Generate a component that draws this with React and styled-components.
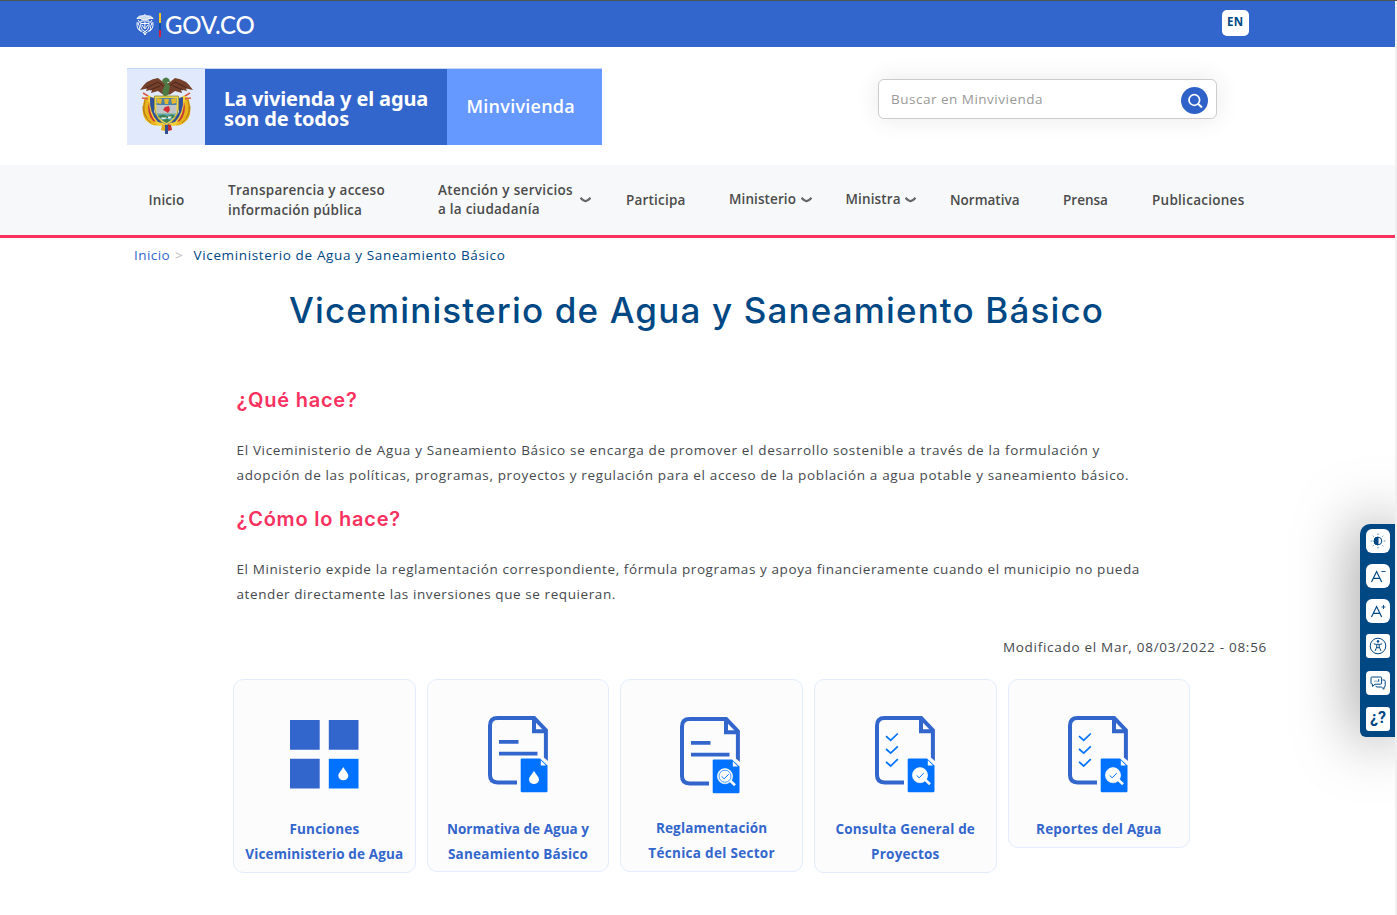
import React from 'react';
import styled, { createGlobalStyle } from 'styled-components';

const sans = '"Open Sans", "Noto Sans", sans-serif';
const display = 'Inter, "Open Sans", sans-serif';

const GlobalStyle = createGlobalStyle`
  *, *::before, *::after { box-sizing: border-box; }
  html { background: #f0f0f0; overflow: hidden; }
  body { margin: 0; font-family: ${sans}; font-size: 13.5px; color: #444; }
  svg { display: block; }
`;

const Page = styled.div`
  position: relative;
  width: 1395px;
  height: 914px;
  background: #fff;
  overflow: hidden;
`;
const TopEdge = styled.div`
  width: 1397px;
  height: 1px;
  background: #4a5551;
`;
const GovBar = styled.header`
  height: 46px;
  padding: 9px 146.5px 0 136px;
  display: flex;
  justify-content: space-between;
  align-items: flex-start;
  background: #3366cc;
`;
const GovLogo = styled.a`
  display: flex;
  align-items: center;
  height: 30px;
  color: #fff;
`;
const Flag = styled.span`
  width: 2px;
  height: 24px;
  margin: 0 4px 0 5px;
  background: linear-gradient(#f2c61f 0 42%, #0b4ea2 42% 70%, #d0213f 70%);
`;
const GovName = styled.span`
  font: 500 24px/30px Lato, sans-serif;
  letter-spacing: -0.25px;
`;
const Lang = styled.button`
  width: 26.5px;
  height: 26px;
  padding: 0 0 2px;
  border: 0;
  border-radius: 5px;
  background: #fff;
  color: #004884;
  font: 700 11.5px/24px ${sans};
  letter-spacing: 0.3px;
`;
const Masthead = styled.div`
  height: 118px;
  padding: 20.5px 178.5px 0 127px;
  display: flex;
  justify-content: space-between;
  align-items: flex-start;
`;
const Banner = styled.div`
  display: flex;
  width: 475px;
  height: 77.5px;
  border-top: 1px solid #c6d6f6;
  color: #fff;
`;
const CrestBox = styled.div`
  width: 77.5px;
  padding: 8.5px 0 0 12.5px;
  background: #e1eafc;
`;
const Slogan = styled.div`
  width: 242.5px;
  padding: 20px 0 0 19.5px;
  background: #3366cc;
  font: 700 20px/20px "Noto Sans", sans-serif;
  letter-spacing: -0.15px;
  white-space: nowrap;
`;
const Ministry = styled.div`
  flex: 1;
  padding-left: 19.5px;
  background: #6699ff;
  font: 600 18px/74px ${sans};
  letter-spacing: 0.25px;
`;
const Search = styled.div`
  display: flex;
  justify-content: space-between;
  align-items: center;
  width: 339px;
  height: 40px;
  margin-top: 11.5px;
  padding: 0 7.5px 0 12.5px;
  border: 1px solid #ccc;
  border-radius: 6px;
  background: #fff;
  box-shadow: 0 0 24px rgba(0, 0, 0, 0.09);
  color: #999;
  letter-spacing: 0.5px;
`;
const SearchButton = styled.span`
  display: grid;
  place-items: center;
  width: 27px;
  height: 27px;
  margin-top: 3px;
  border-radius: 50%;
  background: #2f62c9;
`;
const Nav = styled.nav`
  display: grid;
  grid-template-columns: 79.5px 210px 188px 103px 116.5px 104.5px 113px 89px auto;
  align-items: center;
  height: 73px;
  padding-left: 148.5px;
  background: #f6f8fa;
  border-bottom: 3px solid #f8315f;
`;
const NavItem = styled.a`
  display: flex;
  align-items: center;
  gap: ${p => p.$gap || 4.5}px;
  margin-top: ${p => p.$shift || 0}px;
  color: #4b4b4b;
  font-weight: 600;
  line-height: ${p => p.$lh || 20}px;
  white-space: nowrap;
`;
const Label = styled.span`
  display: block;
  white-space: nowrap;
  letter-spacing: ${p => p.$ls || 0}px;
`;
const Crumbs = styled.div`
  display: flex;
  padding: 7px 0 0 134px;
  line-height: 20px;
  color: #004884;
`;
const CrumbLink = styled.a`
  color: #3366cc;
  letter-spacing: 0.43px;
`;
const CrumbMark = styled.span`
  width: 18.5px;
  margin-left: 5px;
  color: #bbb;
`;
const Title = styled.h1`
  margin: 23px 0 0;
  padding-left: 289px;
  color: #004884;
  font: 500 35px/44px ${display};
  letter-spacing: 1.15px;
  white-space: nowrap;
`;
const Article = styled.main`
  padding: 56px 128px 0 236.5px;
`;
const Section = styled.section`
  height: 119px;
`;
const Heading = styled.h2`
  margin: 0 0 25.5px;
  color: #f8315f;
  font: 600 20px/24px ${display};
  letter-spacing: ${p => p.$ls}px;
`;
const Line = styled(Label)`
  line-height: 25px;
  color: #45494e;
`;
const Modified = styled(Line)`
  margin-top: 8.5px;
  text-align: right;
`;
const Cards = styled.div`
  display: grid;
  grid-template-columns: repeat(5, 182.5px);
  column-gap: 11.15px;
  align-items: start;
  padding: 19.5px 0 0 233.1px;
`;
const Card = styled.a`
  display: flex;
  flex-direction: column;
  align-items: center;
  height: ${p => p.$h}px;
  padding-top: ${p => p.$top}px;
  border: 1px solid #e2edfc;
  border-radius: 10px;
  background: #fcfcfd;
  color: #3366cc;
  font-weight: 700;
  line-height: 25px;
`;
const IconBox = styled.div`
  height: ${p => p.$h}px;
  padding-right: ${p => p.$nudge || 0}px;
`;
const Toolbar = styled.aside`
  position: absolute;
  right: 0;
  top: 523px;
  width: 35px;
  height: 213px;
  padding: 5px 5px 0 6px;
  display: flex;
  flex-direction: column;
  background: #004884;
  border-radius: 10px 0 0 6px;
  box-shadow: 0 0 60px rgba(0, 0, 0, 0.5);
`;
const Tool = styled.button`
  flex: none;
  display: grid;
  place-items: center;
  width: 24px;
  height: 24px;
  margin: 0 0 ${p => p.$gap || 11}px;
  padding: 0;
  border: 0;
  border-radius: ${p => p.$r || 6}px;
  background: #fff;
  color: #004884;
`;
const Query = styled.span`
  font: 700 16px/20px Roboto, sans-serif;
  margin-top: -2px;
`;

const Chevron = () => (
  <svg width="11" height="7" viewBox="0 0 11 7" fill="none" stroke="#666" strokeWidth="2.1">
    <path d="M.4 1.8Q3 4.6 5.5 5.2Q8 4.6 10.6 1.8" />
  </svg>
);

const MiniCrest = () => (
  <svg width="18" height="22" viewBox="0 0 18 22" fill="none" stroke="#fff" strokeWidth="1">
    <path d="M.8 4.5Q3 1.2 7.2 1.8L8.8.7L10.3 1.8Q15 1.2 17.2 4.5L14 4.2L11.3 5.8H6.7L4 4.2Z" fill="#fff" fillOpacity=".75" />
    <path d="M4.8 7H13V12.5Q12.4 16.3 8.9 17.6Q5.4 16.3 4.8 12.5Z" />
    <path d="M5 9.5H13M6 11L8.8 15L12 11M8.9 8V14M2 6L3.5 8L2 10L3.8 12.5L3 15L6.5 18M16 6L14.5 8L16 10L14.2 12.5L15 15L11.5 18M1.2 8Q0 15 5.2 17.5M16.8 8Q18 15 12.8 17.5M7.2 18L8.9 21L10.7 18M8.9 17V20" />
  </svg>
);

const Crest = () => (
  <svg width="53" height="58" viewBox="0 0 53 58">
    <path d="M5 20Q-1 38 8 45Q14 51 23 47L14 38L11 20ZM48 20Q54 38 45 45Q39 51 30 47L39 38L42 20Z" fill="#e7b41c" />
    <path d="M8 18L14 21V37L24 48L19 49Q6 40 8 18ZM45 18L39 21V37L29 48L34 49Q47 40 45 18Z" fill="#f4cf35" />
    <path d="M10 20L14 21V35L22 46L18 45Q9 36 10 20ZM43 20L39 21V35L31 46L35 45Q44 36 43 20Z" fill="#2f4f9b" />
    <path d="M9 24Q9 37 16 45L13 44Q6 36 9 24ZM44 24Q44 37 37 45L40 44Q47 36 44 24Z" fill="#c63a32" />
    <path d="M5 23Q2 35 7 41M3 29Q3 39 11 46M48 23Q51 35 46 41M50 29Q50 39 42 46" fill="none" stroke="#b77b13" strokeWidth="1" />
    <path d="M3 16L8 19M2 21L8 22M50 16L45 19M51 21L45 22" stroke="#d85b50" strokeWidth="1.6" />
    <path d="M0 13Q7 2 18 1L23 5L26.5 7L30 5L35 1Q46 2 53 13L46 11.5L47 14L41 12.5L42 16L35 14L30 17.5H23L18 14L11 16L12 12.5L6 14L7 11.5Z" fill="#74402b" />
    <path d="M6 11L18 5L23 9M10 13L20 9M47 11L35 5L30 9M43 13L33 9" fill="none" stroke="#4a2619" strokeWidth="1" />
    <path d="M23 2Q26-1 29 2L30 5H27L30 9L28 18L24 20L22 14L25 8L22 4Z" fill="#4e7b45" />
    <path d="M14.5 19H38.5V32Q37 43 26.5 48Q16 43 14.5 32Z" fill="#e9d34a" stroke="#8b8531" strokeWidth=".8" />
    <path d="M16.5 21H36.5V28H16.5Z" fill="#4f83a6" />
    <path d="M17 21L22 22L21 27L17 26ZM36 21L31 22L32 27L36 26ZM24 22H29L28 27H25Z" fill="#e5b72f" />
    <path d="M16.5 28H36.5V36.5H16.5Z" fill="#bfc4c9" />
    <path d="M16.8 36.5H36Q34 42 26.5 46Q19 42 16.8 36.5Z" fill="#5ba8bd" />
    <path d="M18 39L23 37.5L27 39L32 37.5L35 39L33 41H20ZM22 43L27 42L31 43L26.5 46Z" fill="#3f8052" />
    <path d="M21 40.5H27L25 42H22ZM28 39.5H32L30 41.5H28Z" fill="#f2f2e5" />
    <path d="M25 30L29 29L30 33L28 36L25 34L23 33Z" fill="#d32d35" />
    <path d="M22 48L26 47L25 54L21 53Z" fill="#dfae21" />
    <path d="M25 48H28L28 57H25Z" fill="#304e91" />
    <path d="M28 47L31 48L32 53L28 54Z" fill="#bf302d" />
  </svg>
);

const Drop = ({ x, y }) => (
  <path transform={`translate(${x} ${y})`} d="M0-6.6C1-4.2 5-.5 5 2.2A5 4.5 0 0 1-5 2.2C-5-.5-1-4.2 0-6.6Z" fill="#fff" />
);

const Squares = () => (
  <svg width="69" height="69" viewBox="0 0 69 69">
    <path d="M0 0H29.7V29.7H0ZM38.8 0H68.5V29.7H38.8ZM0 38.8H29.7V68.5H0Z" fill="#3366cc" />
    <path d="M38.8 38.8H68.5V68.5H38.8Z" fill="#0072ff" />
    <Drop x={53.3} y={53.6} />
  </svg>
);

const Doc = ({ checks, badge }) => (
  <svg width="60" height="77" viewBox="0 0 60 77">
    <g fill="none" stroke="#3366cc" strokeWidth="4">
      <path d="M29 66.4H9.5Q2 66.4 2 59V9.5Q2 2 9.5 2H46.2L57.9 14.2V45" />
      <path d="M46 2V15.2H58" />
      {!checks && <path d="M11 25.8H30.5M11 37.7H49.5" strokeWidth="3.8" />}
    </g>
    {checks && (
      <path
        d="M11 20.2L15.7 24.4L22.8 17.5M11 33L15.7 37.2L22.8 30.3M11 45.8L15.7 50L22.8 43.1"
        fill="none" stroke="#0072ff" strokeWidth="1.7"
      />
    )}
    <path d="M29.5 67V40H54L60 45V71" fill="#fcfcfd" />
    <path d="M34 42.4H52L59.5 49.6V75Q59.5 76.2 58.3 76.2H34Q32.7 76.2 32.7 75V43.6Q32.7 42.4 34 42.4Z" fill="#0072ff" />
    <path d="M52.8 44.3V49.5H58Z" fill="#fff" />
    {badge === 'drop' && <Drop x={46} y={61.3} />}
    {badge !== 'drop' && (
      <g fill="none" stroke="#fff">
        <path d="M50 63.5L55 68.2" strokeWidth="2.6" />
        <circle cx="45" cy="59.2" r="7.6" fill="#fff" strokeWidth=".6" />
        {badge === 'ring' && <circle cx="45" cy="59.2" r="6" stroke="#0072ff" strokeWidth=".7" />}
        <path d="M41.6 59.4L44.2 61.8L48.7 57.2" stroke="#0072ff" strokeWidth="1" />
      </g>
    )}
  </svg>
);

const toolStroke = { fill: 'none', stroke: '#004884', strokeWidth: 1 };

const Contrast = () => (
  <svg width="16" height="16" viewBox="0 0 16 16" {...toolStroke}>
    <circle cx="8" cy="8" r="3.8" />
    <path d="M8 4A4 4 0 0 0 8 12Z" fill="#004884" />
    <path d="M8 .5V2M8 14V15.5M.8 8H2.3M13.7 8H15.2M2.7 2.7L3.7 3.7M12.3 12.3L13.3 13.3M13.3 2.7L12.3 3.7M3.7 12.3L2.7 13.3" strokeOpacity=".65" />
  </svg>
);
const FontSize = ({ plus }) => (
  <svg width="18" height="18" viewBox="0 0 18 18" {...toolStroke} strokeWidth="1.2">
    <path d="M2.5 15L7.6 4.5L12.7 15M4.3 11.4H10.9" />
    <path d={plus ? 'M12.5 5H16.5M14.5 3V7' : 'M12.5 4.5H16.5'} strokeWidth=".9" />
  </svg>
);
const Accessibility = () => (
  <svg width="18" height="18" viewBox="0 0 18 18" {...toolStroke}>
    <circle cx="9" cy="9" r="7.8" />
    <circle cx="9" cy="4.4" r=".9" fill="#004884" />
    <path d="M4.8 6.8L7.8 7.5V10L6 14M13.2 6.8L10.2 7.5V10L12 14M7.8 7.3H10.2M7.8 10.3L9 11L10.2 10.3" />
  </svg>
);
const Chat = () => (
  <svg width="18" height="18" viewBox="0 0 18 18" {...toolStroke}>
    <path d="M3 3H11.5Q12.6 3 12.6 4V9Q12.6 10.2 11.5 10.2H6L3.5 12.5V10.2Q2 10.2 2 9V4Q2 3 3 3Z" />
    <path d="M13.5 6H15Q16.2 6 16.2 7.2V11.8Q16.2 13 15 13V15.3L12.3 13H8Q7 13 6.8 11.8M5.5 7.2H6.5M7.5 7.2H8.5M9.7 5.2V7.7" />
  </svg>
);

const cards = [
  { h: 194, top: 39.5, box: 97.3, icon: <Squares />, lines: [['Funciones', .2], ['Viceministerio de Agua', .15]] },
  { h: 193, top: 35.5, box: 101.3, icon: <Doc badge="drop" />, lines: [['Normativa de Agua y', .04], ['Saneamiento Básico', .24]] },
  { h: 193, top: 37.3, box: 98.9, nudge: 3, icon: <Doc badge="ring" />, lines: [['Reglamentación', .16], ['Técnica del Sector', .3]] },
  { h: 194, top: 36, box: 100.8, nudge: 1, icon: <Doc checks />, lines: [['Consulta General de', .18], ['Proyectos', .23]] },
  { h: 169, top: 36, box: 100.8, nudge: 1.5, icon: <Doc checks />, lines: [['Reportes del Agua', .21]] },
];

export default function App() {
  return (
    <>
      <GlobalStyle />
      <TopEdge />
      <Page>
        <GovBar>
          <GovLogo>
            <MiniCrest />
            <Flag />
            <GovName>GOV.CO</GovName>
          </GovLogo>
          <Lang>EN</Lang>
        </GovBar>
        <Masthead>
          <Banner>
            <CrestBox><Crest /></CrestBox>
            <Slogan>La vivienda y el agua<br />son de todos</Slogan>
            <Ministry>Minvivienda</Ministry>
          </Banner>
          <Search>
            <span>Buscar en Minvivienda</span>
            <SearchButton>
              <svg width="16" height="16" viewBox="0 0 16 16" fill="none" stroke="#fff" strokeWidth="1.7">
                <circle cx="7.3" cy="7" r="5.3" />
                <path d="M11 10.8L15 14.4" strokeWidth="2" />
              </svg>
            </SearchButton>
          </Search>
        </Masthead>
        <Nav>
          <NavItem><Label $ls={.1}>Inicio</Label></NavItem>
          <NavItem>
            <div><Label $ls={.26}>Transparencia y acceso</Label><Label $ls={.2}>información pública</Label></div>
          </NavItem>
          <NavItem $lh={19} $gap={7.5} $shift={-1}>
            <div><Label $ls={.32}>Atención y servicios</Label><Label $ls={.24}>a la ciudadanía</Label></div>
            <Chevron />
          </NavItem>
          <NavItem><Label $ls={.2}>Participa</Label></NavItem>
          <NavItem $shift={-2}><Label $ls={.1}>Ministerio</Label><Chevron /></NavItem>
          <NavItem $shift={-2}><Label $ls={.13}>Ministra</Label><Chevron /></NavItem>
          <NavItem><Label $ls={0}>Normativa</Label></NavItem>
          <NavItem><Label $ls={0}>Prensa</Label></NavItem>
          <NavItem><Label $ls={.27}>Publicaciones</Label></NavItem>
        </Nav>
        <Crumbs>
          <CrumbLink>Inicio</CrumbLink>
          <CrumbMark>&gt;</CrumbMark>
          <Label $ls={.64}>Viceministerio de Agua y Saneamiento Básico</Label>
        </Crumbs>
        <Title>Viceministerio de Agua y Saneamiento Básico</Title>
        <Article>
          <Section>
            <Heading $ls={.75}>¿Qué hace?</Heading>
            <Line $ls={.665}>El Viceministerio de Agua y Saneamiento Básico se encarga de promover el desarrollo sostenible a través de la formulación y</Line>
            <Line $ls={.647}>adopción de las políticas, programas, proyectos y regulación para el acceso de la población a agua potable y saneamiento básico.</Line>
          </Section>
          <Section>
            <Heading $ls={.78}>¿Cómo lo hace?</Heading>
            <Line $ls={.593}>El Ministerio expide la reglamentación correspondiente, fórmula programas y apoya financieramente cuando el municipio no pueda</Line>
            <Line $ls={.59}>atender directamente las inversiones que se requieran.</Line>
          </Section>
          <Modified $ls={.71}>Modificado el Mar, 08/03/2022 - 08:56</Modified>
        </Article>
        <Cards>
          {cards.map(c => (
            <Card key={c.lines[0][0]} $h={c.h} $top={c.top}>
              <IconBox $h={c.box} $nudge={c.nudge}>{c.icon}</IconBox>
              {c.lines.map(([text, ls]) => <Label key={text} $ls={ls}>{text}</Label>)}
            </Card>
          ))}
        </Cards>
        <Toolbar>
          <Tool><Contrast /></Tool>
          <Tool><FontSize /></Tool>
          <Tool><FontSize plus /></Tool>
          <Tool $r={3} $gap={12.5}><Accessibility /></Tool>
          <Tool $r={4} $gap={12}><Chat /></Tool>
          <Tool $r={3}><Query>¿?</Query></Tool>
        </Toolbar>
      </Page>
    </>
  );
}
